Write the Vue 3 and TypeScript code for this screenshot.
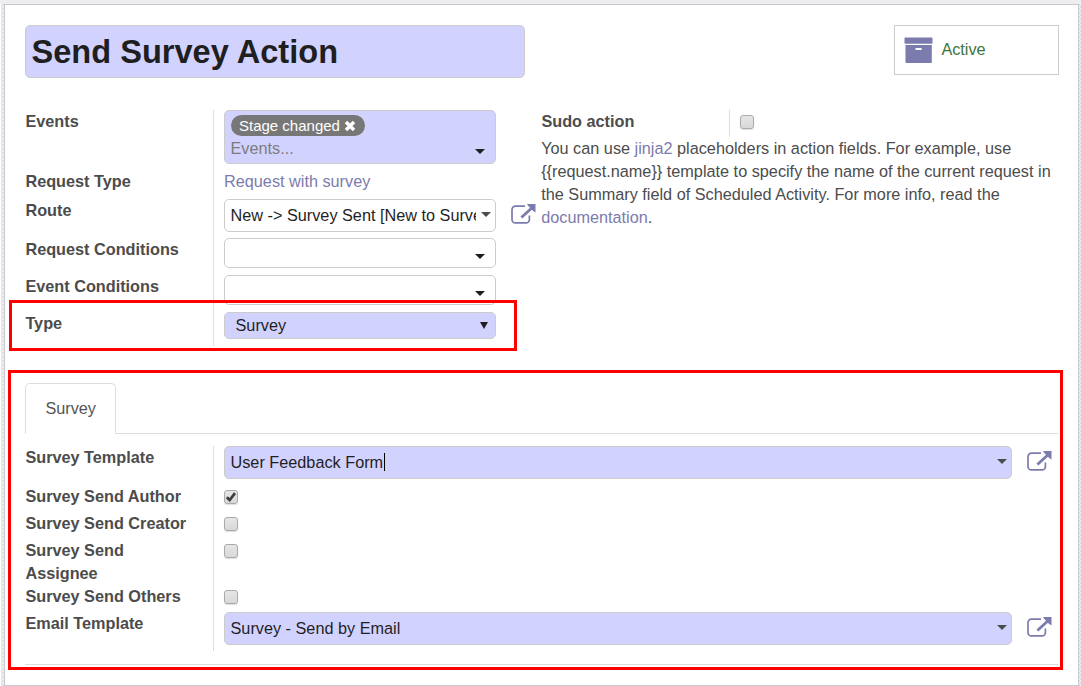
<script setup lang="ts">
import { h } from 'vue'

interface CheckRow {
  label: string
  checked: boolean
}

const checks: CheckRow[] = [
  { label: 'Survey Send Author', checked: true },
  { label: 'Survey Send Creator', checked: false },
  { label: 'Survey Send Assignee', checked: false },
  { label: 'Survey Send Others', checked: false },
]

const jinja = '{{request.name}}'

const ExternalLink = () =>
  h('svg', { width: 26, height: 21, viewBox: '0 0 26 21', fill: 'none' }, [
    h('path', {
      d: 'M14 2.1H4.4A3.4 3.4 0 0 0 1 5.5V15.5A3.4 3.4 0 0 0 4.4 18.9H15A3.4 3.4 0 0 0 18.4 15.5V11.5',
      stroke: '#7c7bad',
      'stroke-width': 1.7,
    }),
    h('path', { d: 'M10.4 13.6L20.5 4.2', stroke: '#7c7bad', 'stroke-width': 2.8 }),
    h('path', { d: 'M16 0H24.5V8.4L21.9 6.7L17.3 2Z', fill: '#7c7bad' }),
  ])
</script>

<template>
  <div class="page">
    <main class="sheet">
      <header class="head">
        <div class="title">Send Survey Action</div>
        <button class="stat">
          <svg width="30" height="28" viewBox="0 0 30 28">
            <rect x="0.5" y="0.4" width="28" height="6.4" rx="1" fill="#7c7bad" />
            <path d="M1.5 8H27.8V25.2Q27.8 26 27 26H2.3Q1.5 26 1.5 25.2Z" fill="#7c7bad" />
            <rect x="11.3" y="11" width="6.6" height="2.1" rx="1" fill="#fff" />
          </svg>
          <span>Active</span>
        </button>
      </header>

      <section class="columns">
        <div class="group main-group">
          <label>Events</label>
          <div class="cell">
            <div class="field required tags">
              <span class="tag">Stage changed
                <svg width="12" height="12" viewBox="0 0 12 12"><path d="M2 2L10 10M10 2L2 10" stroke="#fff" stroke-width="3.5" /></svg>
              </span>
              <span class="placeholder">Events...</span>
              <i class="caret low"></i>
            </div>
          </div>
          <label>Request Type</label>
          <div class="cell"><a>Request with survey</a></div>
          <label>Route</label>
          <div class="cell">
            <div class="field combo"><span class="value">New -&gt; Survey Sent [New to Surve</span><i class="caret soft"></i></div>
            <ExternalLink class="ext" />
          </div>
          <label>Request Conditions</label>
          <div class="cell"><div class="field tags empty"><i class="caret"></i></div></div>
          <label>Event Conditions</label>
          <div class="cell"><div class="field tags empty"><i class="caret"></i></div></div>
          <label>Type</label>
          <div class="cell">
            <div class="field required select"><span>Survey</span><i class="caret tall"></i></div>
          </div>
        </div>

        <div class="aside">
          <div class="group sudo">
            <label>Sudo action</label>
            <div class="cell"><span class="check"></span></div>
          </div>
          <p>
            You can use <a>jinja2</a> placeholders in action fields. For example, use<br />
            {{ jinja }} template to specify the name of the current request in<br />
            the Summary field of Scheduled Activity. For more info, read the<br />
            <a>documentation</a>.
          </p>
        </div>
      </section>

      <nav class="tabs"><span class="tab">Survey</span></nav>

      <section class="group survey">
        <label>Survey Template</label>
        <div class="cell">
          <div class="field required combo"><span class="value editing">User Feedback Form</span><i class="caret soft"></i></div>
          <ExternalLink class="ext" />
        </div>
        <template v-for="row in checks" :key="row.label">
          <label>{{ row.label }}</label>
          <div class="cell">
            <span class="check">
              <svg v-if="row.checked" width="12" height="12" viewBox="0 0 12 12"><path d="M1.8 6.2L4.7 9L10 2.2" fill="none" stroke="#3c3c3c" stroke-width="2.7" /></svg>
            </span>
          </div>
        </template>
        <label>Email Template</label>
        <div class="cell">
          <div class="field required combo"><span class="value">Survey - Send by Email</span><i class="caret soft"></i></div>
          <ExternalLink class="ext" />
        </div>
      </section>
      <hr />
    </main>
    <div class="mark mark-type"></div>
    <div class="mark mark-survey"></div>
  </div>
</template>

<style>
body {
  margin: 0;
  overflow: hidden;
}
</style>

<style scoped>
* {
  box-sizing: border-box;
}
.page {
  position: relative;
  width: 1081px;
  height: 686px;
  padding: 4px 2px 0 4px;
  background:
    linear-gradient(#eee, #eee) 0 0 / 100% 4px no-repeat,
    linear-gradient(#fff, #fff) 0 0 / 1px 100% no-repeat,
    repeating-conic-gradient(#dededf 0 25%, #f0f0f0 0 50%) 0 0 / 4px 4px;
  font: 16.25px/23px "Liberation Sans", Arial, sans-serif;
  color: #4c4c4c;
}
.sheet {
  height: 682px;
  border: 1px solid #c8c8d3;
  background: #fff;
  padding: 20px 19px 0 20px;
}
.head {
  display: flex;
  justify-content: space-between;
  height: 85px;
}
.title {
  width: 500px;
  height: 53px;
  border: 1px solid #ccc;
  border-radius: 5px;
  background: #d2d2ff;
  padding-left: 5.5px;
  font-size: 32.6px;
  line-height: 51px;
  font-weight: bold;
  color: #1f1f1f;
}
.stat {
  display: flex;
  width: 165px;
  height: 50px;
  padding: 11px 0 0 9px;
  border: 1px solid #ccc;
  background: #fff;
  font: inherit;
  color: #3c763d;
  align-items: flex-start;
}
.stat span {
  margin: 1px 0 0 7.4px;
}
.columns {
  display: flex;
  height: 273px;
}
.group {
  display: grid;
  grid-template-columns: 189px 1fr;
}
.main-group {
  width: 516px;
  grid-template-rows: 60px 29px 39px 37px 37px 34px;
  align-content: start;
}
.group label {
  font-weight: bold;
  padding: 0 19px 0 0.4px;
  border-right: 1px solid #ddd;
}
.cell {
  display: flex;
  align-items: flex-start;
  padding-left: 10px;
}
a {
  color: #7c7bad;
}
.field {
  display: flex;
  border: 1px solid #ccc;
  border-radius: 5px;
  background: #fff;
  color: #1f1f1f;
}
.main-group .field {
  width: 272px;
}
.required {
  background: #d2d2ff;
}
.tags {
  display: grid;
  grid-template-columns: 1fr 10px;
  align-content: start;
  height: 54px;
  padding: 4px 10px 0 6px;
}
.tag {
  grid-column: 1 / 3;
  justify-self: start;
  display: flex;
  align-items: center;
  gap: 4px;
  height: 21px;
  padding: 0 9px 0 8px;
  border-radius: 11px;
  background: #777;
  color: #fff;
  font-size: 15px;
  line-height: 21px;
}
.placeholder {
  color: #7c7c7c;
  line-height: 23px;
  margin: 1px 0 0 -0.5px;
}
.empty {
  height: 30px;
}
.caret {
  grid-column: 2;
  width: 10px;
  height: 5px;
  background: #1f1f1f;
  clip-path: polygon(0 0, 100% 0, 50% 100%);
  margin-top: 11px;
}
.low {
  margin-top: 13px;
}
.combo {
  height: 33px;
  padding: 0 4px 0 5.5px;
  justify-content: space-between;
  line-height: 31px;
}
.value {
  overflow: hidden;
  white-space: nowrap;
}
.main-group .value {
  width: 245.5px;
}
.editing {
  border-right: 1px solid #000;
  height: 18px;
  line-height: 19px;
  margin-top: 6px;
  padding-right: 0.5px;
}
.soft {
  background: #4c4c4c;
  margin-top: 12px;
}
.select {
  height: 27px;
  padding: 0 7px 0 10.5px;
  justify-content: space-between;
  line-height: 25px;
}
.tall {
  width: 8px;
  height: 7px;
  margin-top: 9px;
}
.ext {
  margin: 5px 0 0 15px;
  flex: none;
}
.check {
  width: 14px;
  height: 14px;
  margin-top: 5px;
  border: 1px solid #aaa;
  border-radius: 3px;
  background: linear-gradient(#e6e6e6, #d8d8d8);
  box-shadow: 0 1px 1px #0002;
}
.check svg {
  display: block;
}
.aside {
  width: 517px;
  white-space: nowrap;
}
.sudo {
  height: 27px;
}
.aside p {
  margin: 0;
  padding-left: 0.2px;
}
.tabs {
  height: 51px;
  margin-right: 1px;
  border-bottom: 1px solid #ddd;
}
.tab {
  display: block;
  width: 91px;
  height: 51px;
  border: 1px solid #ddd;
  border-bottom-color: #fff;
  border-radius: 5px 5px 0 0;
  background: #fff;
  padding-left: 19.4px;
  line-height: 49px;
  color: #555;
}
.survey {
  margin-top: 12px;
  grid-template-rows: 39px 27px 27px 46px 27px 39px;
}
.survey .field {
  width: 788px;
}
hr {
  margin: 13px 1px 0 0;
  border: 0;
  border-top: 1px solid #ddd;
}
.mark {
  position: absolute;
  border: 3px solid #f00;
}
.mark-type {
  left: 9px;
  top: 300px;
  width: 508px;
  height: 51px;
}
.mark-survey {
  left: 8px;
  top: 370px;
  width: 1055px;
  height: 300px;
}
</style>
